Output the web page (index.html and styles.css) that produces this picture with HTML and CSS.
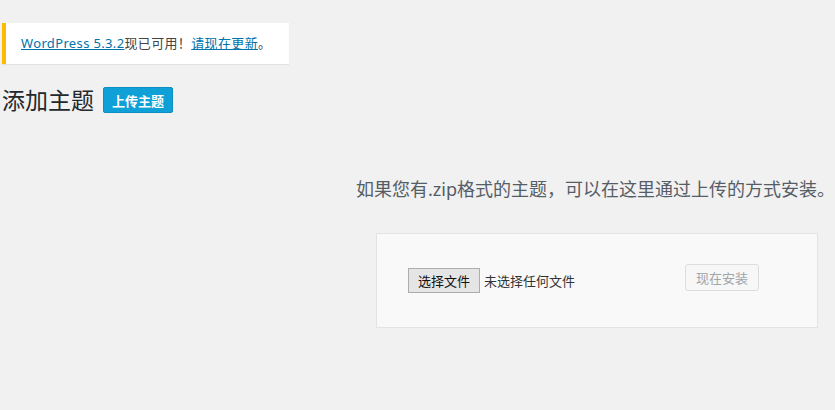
FILE: index.html
```html
<!DOCTYPE html>
<html lang="zh-CN">
<head>
<meta charset="utf-8">
<title>添加主题</title>
<link rel="stylesheet" href="styles.css">
</head>
<body>
<div class="wrap">
  <div class="notice">
    <p><a href="#">WordPress 5.3.2</a>现已可用！<a href="#">请现在更新</a>。</p>
  </div>
  <div class="title-row">
    <h1>添加主题</h1>
    <a class="upload-toggle" href="#">上传主题</a>
  </div>
  <div class="upload">
    <p class="help">如果您有.zip格式的主题，可以在这里通过上传的方式安装。</p>
    <form class="upload-form">
      <div class="file-field">
        <span class="file-btn">选择文件</span>
        <span class="file-name">未选择任何文件</span>
      </div>
      <button class="install" type="button" disabled>现在安装</button>
    </form>
  </div>
</div>
</body>
</html>
```
FILE: styles.css
```css
html, body {
  margin: 0;
  padding: 0;
  background: #f1f1f1;
  overflow: hidden;
}
body {
  font-family: "Noto Sans", "Noto Sans CJK SC", sans-serif;
  font-size: 13px;
  color: #444;
}
.wrap {
  padding: 23px 0 0 2px;
}
.notice {
  display: inline-block;
  background: #fff;
  border-left: 4px solid #ffb900;
  box-shadow: 0 1px 1px rgba(0,0,0,0.06);
  padding: 12px 18px 12px 15px;
}
.notice p {
  margin: 0;
  line-height: 17px;
  color: #444;
  letter-spacing: 0.35px;
}
.notice a {
  color: #0073aa;
  text-decoration: underline;
}
.title-row {
  display: flex;
  align-items: center;
  gap: 9px;
  margin-top: 22px;
}
h1 {
  margin: 0;
  font-size: 23px;
  font-weight: 400;
  color: #23282d;
  line-height: 28px;
}
.upload-toggle {
  display: inline-flex;
  align-items: center;
  justify-content: center;
  width: 70px;
  height: 26px;
  box-sizing: border-box;
  background: #0ea0d6;
  border: 1px solid #0d8fc2;
  border-radius: 2px;
  color: #fff;
  font-weight: 700;
  font-size: 13px;
  text-decoration: none;
}
.upload {
  display: flex;
  flex-direction: column;
  align-items: flex-end;
}
.help {
  margin: 0;
  padding-top: 63px;
  font-size: 18px;
  line-height: 24px;
  color: #555d66;
  white-space: nowrap;
}
.upload-form {
  display: flex;
  align-items: center;
  justify-content: space-between;
  width: 442px;
  height: 95px;
  box-sizing: border-box;
  margin: 32px 17px 0 0;
  padding: 0 58px 6px 31px;
  background: #f9f9f9;
  border: 1px solid #e3e3e3;
}
.file-field {
  display: flex;
  align-items: center;
  gap: 4px;
  margin-top: 6px;
}
.file-btn {
  display: inline-flex;
  align-items: center;
  justify-content: center;
  width: 72px;
  height: 25px;
  box-sizing: border-box;
  background: #e5e5e5;
  border: 1px solid #adadad;
  color: #111;
  font-size: 13px;
}
.file-name {
  color: #333;
  font-size: 13px;
}
.install {
  width: 74px;
  height: 27px;
  box-sizing: border-box;
  background: #f7f7f7;
  border: 1px solid #ddd;
  border-radius: 3px;
  color: #a0a5aa;
  font-family: inherit;
  font-size: 13px;
  padding: 0;
}
```
